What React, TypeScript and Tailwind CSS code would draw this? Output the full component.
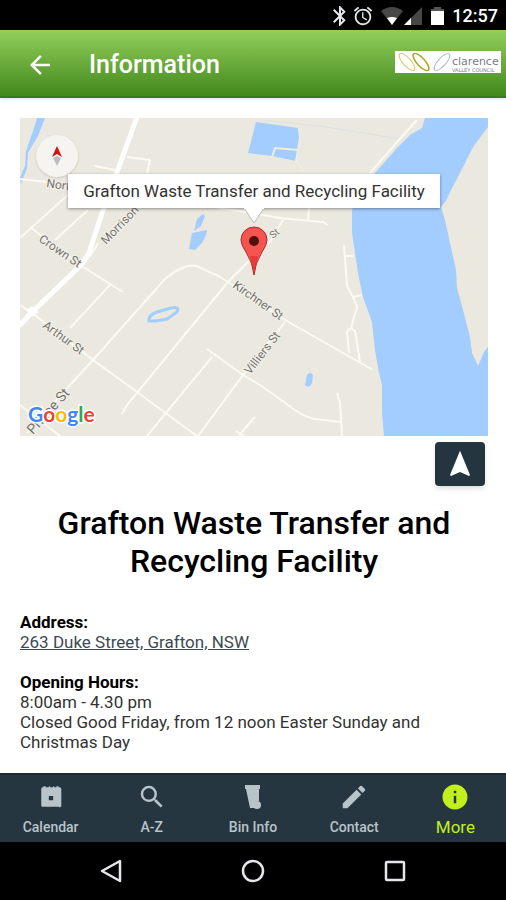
import React from 'react';
import {
  MdAlarm,
  MdArrowBack,
  MdBluetooth,
  MdEdit,
  MdInfo,
  MdNavigation,
  MdSearch,
} from 'react-icons/md';

const roads = [
  'M0 187L12 195L73 242L117 274L177 318',
  'M0 120L50 75L60 66',
  'M10 109L60 147L103 174',
  'M90 167L50 210',
  'M7 315L50 267L73 242L137 170Q148 156 160 151Q170 146 177 148L200 159L208 164L265 202L353 252',
  'M102 296L107 287L208 164L230 142L250 124L263 102',
  'M197 90L227 94L260 100L303 104L308 107',
  'M288 102L289 90',
  'M127 318L192 239',
  'M187 231L223 257L240 267L275 292Q285 299 295 301L321 304',
  'M317 275L320 285L322 318',
  'M178 318L223 257L265 204',
  'M219 317L235 299',
  'M216 313L224 318',
  'M324 127L327 168L333 179L337 189L331 210L327 214L329 235',
  'M331 210L335 213L340 244',
  'M333 179L342 177',
  'M325 138L333 138',
  'M397 2L377 24L350 55',
  'M75 48L95 52',
  'M107 39L130 42L127 55',
  'M0 61L27 64',
  'M35 122L68 92',
  'M78 125L70 139',
  'M0 287L40 318',
];

function MapCanvas() {
  return (
    <svg
      viewBox="0 0 468 318"
      preserveAspectRatio="xMidYMid slice"
      className="block h-full w-full"
      fontFamily="Roboto, sans-serif"
      aria-hidden="true"
    >
      <rect width="468" height="318" fill="#eae8df" />

      {/* water */}
      <g fill="#a3ccff">
        <path d="M405 0L402 10L390 17L377 30L355 55L337 79L332 92L332 115L338 155L343 179L352 204L355 232L359 255L362 267L362 295L364 318H468V229L464 234L458 248L452 235L450 219L443 192L437 170L436 152L430 125L425 102L421 89L426 83L430 74L443 49L453 29L468 9V0Z" />
        <path d="M236 4L278 10L280 18L278 32L276 43L252 38L228 35Z" />
        <path d="M17 0H25L18 18L8 35L7 50L1 66L0 60L5 48L6 33L14 10Z" />
        <path d="M183 96L185 98L181 108L174 113L177 101Z" />
        <path d="M172 115L187 112L186 117L182 125L175 132L169 131Z" />
        <path d="M287 257Q290 253 293 257L292 265Q289 271 285 267Z" />
      </g>
      <path d="M129 203Q128 197 137 194L151 190Q160 188 157 194L147 201L136 203Z" fill="none" stroke="#a3ccff" strokeWidth="3" />
      <path d="M240 2L300 8L380 21" fill="none" stroke="#dde1e4" strokeWidth="1" />
      <path d="M252 39L255 30L278 32M279 10L280 20L276 43L283 52" fill="none" stroke="#eeece3" strokeWidth="2" />

      <g fill="none" stroke="#fbfaf3" strokeWidth="2" strokeLinejoin="round">
        {roads.map((d) => (
          <path key={d} d={d} />
        ))}
      </g>
      <path d="M117 -1L97 54L82 95L70 132Q66 143 57 151L12 194L-1 208" fill="none" stroke="#fff" strokeWidth="5" />
      <path d="M6 192L12 188L19 194L12 199Z" fill="#fff" />

      <g fontSize="12" fill="#73726d" stroke="#f3f1ea" strokeWidth="2" paintOrder="stroke">
        <text transform="translate(26 69) rotate(8)">North St</text>
        <text transform="translate(18 123) rotate(34)">Crown St</text>
        <text transform="translate(86 127) rotate(-46)">Morrison St</text>
        <text transform="translate(22 209) rotate(36)">Arthur St</text>
        <text transform="translate(212 169) rotate(35)">Kirchner St</text>
        <text transform="translate(230 257) rotate(-52)">Villiers St</text>
        <text transform="translate(13 317) rotate(-48)" fontSize="14">Prince St</text>
        <text transform="translate(253 121) rotate(-40)" fontSize="10">St</text>
      </g>

      <text x="8" y="304" fontFamily="Lato, sans-serif" fontSize="21" fontWeight="700" stroke="#fff" strokeWidth="3" paintOrder="stroke">
        <tspan fill="#4285f4">G</tspan>
        <tspan fill="#ea4335">o</tspan>
        <tspan fill="#fbbc05">o</tspan>
        <tspan fill="#4285f4">g</tspan>
        <tspan fill="#34a853">l</tspan>
        <tspan fill="#ea4335">e</tspan>
      </text>
    </svg>
  );
}

function CouncilLogo() {
  return (
    <svg viewBox="0 0 106 22" className="h-[22px] w-[106px]" role="img" aria-label="Clarence Valley Council">
      <rect width="106" height="22" fill="#fff" />
      <g fill="none" strokeWidth="1">
        <ellipse cx="12" cy="11" rx="11" ry="4" transform="rotate(48 12 11)" stroke="#d9c766" />
        <ellipse cx="26" cy="11" rx="11" ry="4" transform="rotate(48 26 11)" stroke="#a9a91f" strokeWidth="1.5" />
        <ellipse cx="47" cy="11" rx="11" ry="4" transform="rotate(-48 47 11)" stroke="#a9b9bd" />
      </g>
      <g fontFamily="DejaVu Sans, sans-serif" fill="#777c86">
        <text x="57" y="14" fontSize="11">clarence</text>
        <text x="57" y="21" fontSize="5">VALLEY COUNCIL</text>
      </g>
    </svg>
  );
}

function CalendarIcon() {
  return (
    <svg viewBox="0 0 24 24" className="h-[26px] w-[26px]" fill="currentColor" aria-hidden="true">
      <path fillRule="evenodd" d="M5 3V2h2v1h3V2h1v1h3V2h1v1h2V2h2v1h1a1.500 1.500 0 0 1 1.500 1.500v15A1.500 1.500 0 0 1 19 21H4.500A1.500 1.500 0 0 1 3 19.500v-15A1.500 1.500 0 0 1 4.500 3zM10 11v4h4v-4z" />
    </svg>
  );
}

function BinIcon() {
  return (
    <svg viewBox="0 0 18 24" className="h-6 w-[18px]" fill="currentColor" aria-hidden="true">
      <path d="M1 0H16V4H15V16H12L10 19V23H6L2 4H1Z" />
      <circle cx="13" cy="20" r="4" />
    </svg>
  );
}

const tabs = [
  { label: 'Calendar', icon: <CalendarIcon /> },
  { label: 'A-Z', icon: <MdSearch className="h-[30px] w-[30px]" /> },
  { label: 'Bin Info', icon: <BinIcon /> },
  { label: 'Contact', icon: <MdEdit className="h-[30px] w-[30px]" /> },
  { label: 'More', icon: <MdInfo className="h-[30px] w-[30px]" />, active: true },
];

function StatusBar() {
  return (
    <div className="flex h-[30px] items-center justify-end bg-black pt-px pr-2 text-white">
      <MdBluetooth className="h-6 w-6 text-gray-200" />
      <MdAlarm className="mr-[7px] h-[22px] w-[22px] text-gray-200" />
      <svg viewBox="0 0 42 18" className="mr-2 h-[18px] w-[42px]" aria-hidden="true">
        <path d="M0 4Q11 -4 22 4L11 18Z" fill="#474747" />
        <path d="M6 11Q11 9 16 11L11 18Z" fill="#fff" />
        <path d="M41 0V18H23Z" fill="#474747" />
        <path d="M30 11V18H23Z" fill="#fff" />
      </svg>
      <svg viewBox="0 0 13 18" className="mr-2 h-[18px] w-[13px]" aria-hidden="true">
        <path d="M0 2H3V0H10V2H13V6H0Z" fill="#555" />
        <path d="M0 4H13V18H0Z" fill="#fff" />
      </svg>
      <span className="text-lg font-medium">12:57</span>
    </div>
  );
}

function FacilityMap() {
  return (
    <div className="relative h-[318px] overflow-hidden">
      <MapCanvas />
      <button
        aria-label="Reset compass"
        className="absolute top-[17px] left-4 flex h-[42px] w-[42px] items-center justify-center rounded-full bg-[#f5f4f1] shadow"
      >
        <svg viewBox="0 0 10 20" className="h-5 w-[10px]">
          <path d="M5 0L10 11L5 8L0 11Z" fill="#d50f12" />
          <path d="M1 12L5 10L9 12L5 20Z" fill="#bdbdbd" />
        </svg>
      </button>
      <div className="absolute top-14 left-1/2 flex w-[372px] -translate-x-1/2 flex-col items-center">
        <div className="h-[34px] w-full bg-white text-center text-[17px] leading-[34px] whitespace-nowrap text-[#333] shadow-[0_1px_3px_rgba(0,0,0,0.4)]">
          Grafton Waste Transfer and Recycling Facility
        </div>
        <svg viewBox="0 0 22 16" className="relative h-4 w-[22px]" aria-hidden="true">
          <path d="M1 0L11 15L21 0" fill="#fff" stroke="#bbb" strokeWidth="1" />
          <path d="M1 0H21" stroke="#fff" strokeWidth="2" />
        </svg>
        <svg viewBox="0 0 28 50" className="mt-[2px] h-[50px] w-7" aria-hidden="true">
          <path d="M14 49Q13 37 6 26Q1 19 1 14A13 13 0 0 1 27 14Q27 19 22 26Q15 37 14 49Z" fill="#f6544f" stroke="#a82a2a" strokeWidth="1" />
          <path d="M10 30H18L14 48Z" fill="#d22" opacity="0.5" />
          <circle cx="14" cy="15" r="5" fill="#510f10" />
        </svg>
      </div>
    </div>
  );
}

export default function App() {
  return (
    <div className="flex min-h-screen flex-col bg-white font-[Roboto,sans-serif] text-black">
      <StatusBar />

      <header className="relative flex h-[68px] items-center border-b-2 border-[#2c8212] bg-linear-to-b from-[#93cf5b] to-[#41891a] pt-1 pr-[5px] pl-[25px] text-white shadow">
        <button aria-label="Back" className="mr-[34px]">
          <MdArrowBack className="h-[30px] w-[30px]" />
        </button>
        <h1 className="flex-1 text-[25px] font-medium">Information</h1>
        <div className="pb-[6px]">
          <CouncilLogo />
        </div>
      </header>

      <main className="flex-1 pt-5 pr-[18px] pb-4 pl-5">
        <FacilityMap />
        <div className="mt-[6px] flex justify-end pr-[3px]">
          <button
            aria-label="Get directions"
            className="flex h-11 w-[50px] items-center justify-center rounded-sm bg-[#243540] text-white shadow-md"
          >
            <MdNavigation className="h-8 w-8" />
          </button>
        </div>

        <h2 className="mt-[18px] text-center text-[32px] leading-[38px] font-medium">
          Grafton Waste Transfer and Recycling Facility
        </h2>

        <div className="mt-8 text-[17px] leading-5 text-[#333]">
          <p className="font-bold text-black">Address:</p>
          <a href="#" className="text-[#3c4a54] underline">263 Duke Street, Grafton, NSW</a>
          <p className="mt-5 font-bold text-black">Opening Hours:</p>
          <p>8:00am - 4.30 pm</p>
          <p>Closed Good Friday, from 12 noon Easter Sunday and Christmas Day</p>
        </div>
      </main>

      <nav className="grid h-[69px] grid-cols-5 border-t-2 border-[#1a2a3c] bg-[#263640]">
        {tabs.map((tab) => (
          <a
            key={tab.label}
            href="#"
            className={`flex flex-col items-center pt-1 ${tab.active ? 'text-[17px] text-[#c1f01c]' : 'text-sm font-medium text-[#b9c3ca]'}`}
          >
            <span className="flex h-9 items-center">{tab.icon}</span>
            <span className="leading-6">{tab.label}</span>
          </a>
        ))}
      </nav>

      <div className="grid h-[58px] grid-cols-3 place-items-center bg-black px-10 text-gray-200">
        <button aria-label="Back">
          <svg viewBox="0 0 24 24" className="h-6 w-6" fill="none" stroke="currentColor" strokeWidth="2.500">
            <path d="M21 2V22L3 12Z" strokeLinejoin="round" />
          </svg>
        </button>
        <button aria-label="Home">
          <svg viewBox="0 0 24 24" className="h-6 w-6" fill="none" stroke="currentColor" strokeWidth="2.500">
            <circle cx="12" cy="12" r="10" />
          </svg>
        </button>
        <button aria-label="Recent apps">
          <svg viewBox="0 0 24 24" className="h-6 w-6" fill="none" stroke="currentColor" strokeWidth="2.500">
            <rect x="3" y="3" width="18" height="18" rx="1" />
          </svg>
        </button>
      </div>
    </div>
  );
}
